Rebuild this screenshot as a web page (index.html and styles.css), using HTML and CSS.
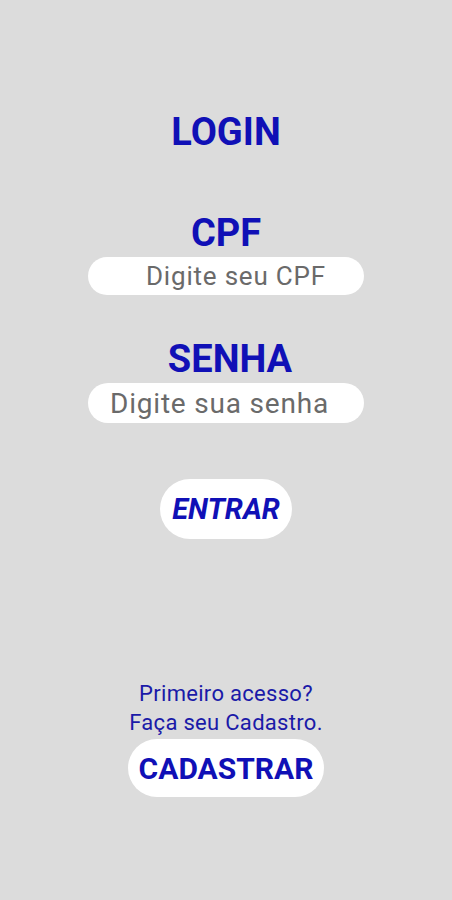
FILE: index.html
```html
<!DOCTYPE html>
<html lang="pt-BR">
<head>
  <meta charset="UTF-8">
  <title>Login</title>
  <link rel="stylesheet" href="styles.css">
</head>
<body>

  <main class="login">
    <h1 class="title">LOGIN</h1>

    <!-- CPF -->
    <label class="label" for="cpf">CPF</label>
    <input class="field field-cpf" id="cpf" type="text" placeholder="Digite seu CPF">

    <!-- Senha -->
    <label class="label label-senha" for="senha">SENHA</label>
    <input class="field field-senha" id="senha" type="password" placeholder="Digite sua senha">

    <button class="btn btn-entrar">ENTRAR</button>

    <!-- Cadastro -->
    <p class="first-access">Primeiro acesso?<br>Faça seu Cadastro.</p>
    <button class="btn btn-cadastrar">CADASTRAR</button>
  </main>

</body>
</html>
```

FILE: styles.css
```css
html, body { margin: 0; height: 100%; }
body { background: #dcdcdc; font-family: Roboto, "Noto Sans", Arial, sans-serif; }

.login { display: flex; flex-direction: column; align-items: center; padding-top: 110px; }

.title { margin: 0; font-size: 38px; font-weight: 700; color: #1010b6; line-height: 44px; }

.label { margin-top: 57px; font-size: 38px; font-weight: 700; color: #1010b6; line-height: 44px; }
.label-senha { margin-top: 42px; padding-left: 8px; }

.field { width: 276px; height: 38px; box-sizing: border-box; border: none; border-radius: 19px; background: #fff; font-family: inherit; color: #666; outline: none; margin-top: 2px; letter-spacing: 0.8px; }
.field::placeholder { color: #6a6a6a; }
.field-cpf { padding-left: 58px; font-size: 26px; }
.field-senha { padding-left: 22px; height: 40px; border-radius: 20px; font-size: 28px; }

.btn { border: none; background: #fff; border-radius: 30px; color: #1010b6; font-family: inherit; font-weight: 700; cursor: pointer; }
.btn-entrar { margin-top: 56px; width: 132px; height: 60px; font-size: 29px; font-style: italic; }

.first-access { margin: 140px 0 0; text-align: center; font-size: 22px; line-height: 29px; color: #1a1aa8; letter-spacing: 0.3px; }

.btn-cadastrar { margin-top: 2px; width: 196px; height: 58px; font-size: 30px; }
```
